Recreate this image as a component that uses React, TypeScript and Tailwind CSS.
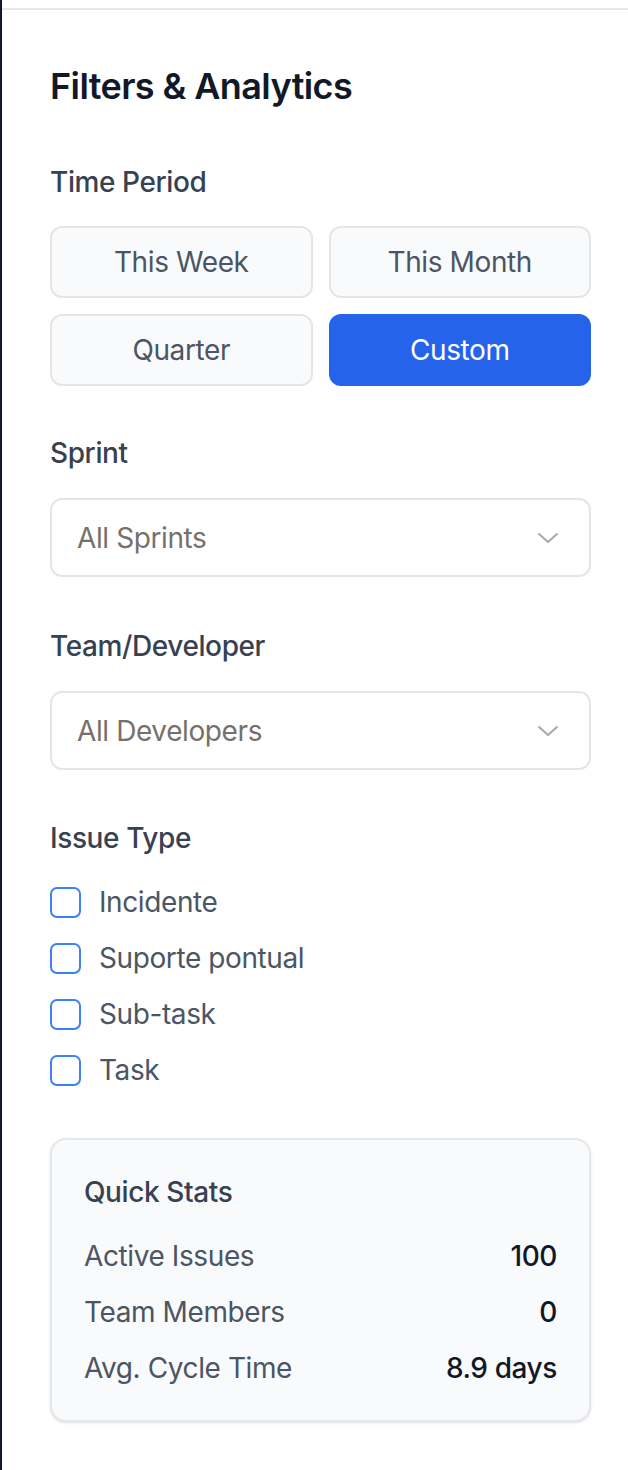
import React from "react";

const Chevron = () => (
  <svg width="22" height="12" viewBox="0 0 22 12" fill="none">
    <path d="M2 2 L11 10 L20 2" stroke="#a8a8a8" strokeWidth="2" strokeLinecap="round" strokeLinejoin="round" />
  </svg>
);

const Select = ({ value }: { value: string }) => (
  <div className="flex h-[79px] w-full items-center justify-between rounded-[12px] border-2 border-[#e5e5e5] bg-white pl-[25px] pr-[30px]">
    <span className="text-[28px] leading-[40px] tracking-[-0.4px] text-[#76706d]">{value}</span>
    <Chevron />
  </div>
);

const Label = ({ children, mb = "mb-[24px]" }: { children: React.ReactNode; mb?: string }) => (
  <div className={`text-[28px] leading-[40px] font-medium tracking-[-0.4px] text-[#374151] ${mb}`}>{children}</div>
);

export default function App() {
  const periods = [
    { label: "This Week", active: false },
    { label: "This Month", active: false },
    { label: "Quarter", active: false },
    { label: "Custom", active: true },
  ];
  const types = ["Incidente", "Suporte pontual", "Sub-task", "Task"];
  const stats = [
    { label: "Active Issues", value: "100" },
    { label: "Team Members", value: "0" },
    { label: "Avg. Cycle Time", value: "8.9 days" },
  ];
  return (
    <div className="h-[1470px] w-[628px] overflow-hidden border-l-2 border-[#111827] bg-white font-['Inter',sans-serif]">
      <div className="mt-[8px] border-t-2 border-[#e5e7eb]">
        <div className="w-[589px] pl-[48px] pt-[48px]">
          <h2 className="mb-[48px] text-[36px] leading-[56px] font-semibold tracking-[-0.6px] text-[#111827]">Filters &amp; Analytics</h2>

          <Label>Time Period</Label>
          <div className="grid grid-cols-2 gap-[16px]">
            {periods.map((p) => (
              <div
                key={p.label}
                className={
                  p.active
                    ? "flex h-[72px] items-center justify-center rounded-[12px] border-2 border-[#2563eb] bg-[#2563eb] text-[28px] leading-[40px] tracking-[-0.4px] text-white"
                    : "flex h-[72px] items-center justify-center rounded-[12px] border-2 border-[#e5e5e5] bg-[#f9fafb] text-[28px] leading-[40px] tracking-[-0.4px] text-[#4b5563]"
                }
              >
                {p.label}
              </div>
            ))}
          </div>

          <div className="mt-[47px]">
            <Label mb="mb-[25px]">Sprint</Label>
            <Select value="All Sprints" />
          </div>

          <div className="mt-[49px]">
            <Label mb="mb-[25px]">Team/Developer</Label>
            <Select value="All Developers" />
          </div>

          <div className="mt-[48px]">
            <Label>Issue Type</Label>
            <div className="flex flex-col gap-[16px]">
              {types.map((t) => (
                <div key={t} className="flex h-[40px] items-center">
                  <div className="h-[31px] w-[31px] rounded-[7px] border-2 border-[#3b82f6] bg-white" />
                  <span className="ml-[18px] text-[28px] leading-[40px] tracking-[-0.4px] text-[#4b5563]">{t}</span>
                </div>
              ))}
            </div>
          </div>

          <div className="mt-[48px] rounded-[16px] border-2 border-[#e5e7eb] bg-[#f9fafb] p-[32px] shadow-sm">
            <div className="mb-[24px] text-[28px] leading-[40px] font-medium tracking-[-0.4px] text-[#374151]">Quick Stats</div>
            <div className="flex flex-col gap-[16px]">
              {stats.map((s) => (
                <div key={s.label} className="flex items-center justify-between text-[28px] leading-[40px] tracking-[-0.4px]">
                  <span className="text-[#4b5563]">{s.label}</span>
                  <span className="font-medium text-[#111827]">{s.value}</span>
                </div>
              ))}
            </div>
          </div>
        </div>
      </div>
    </div>
  );
}
